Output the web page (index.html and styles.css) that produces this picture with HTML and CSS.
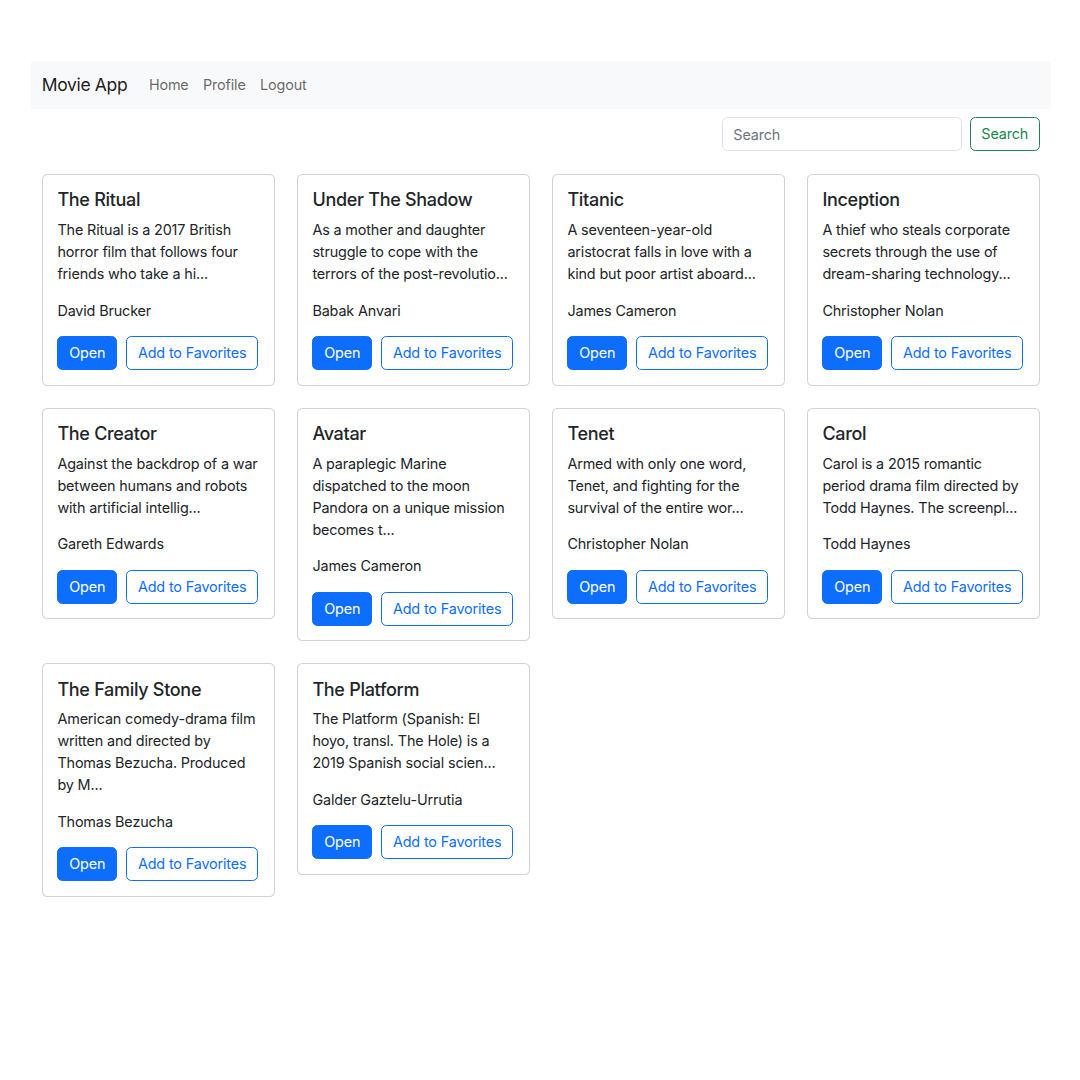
FILE: index.html
```html
<!DOCTYPE html>
<html lang="en">
<head>
<meta charset="utf-8">
<title>Movie App</title>
<link rel="stylesheet" href="styles.css">
</head>
<body>
<div class="page">
  <nav class="navbar">
    <a class="brand" href="#">Movie App</a>
    <ul class="nav">
      <li><a class="nav-link" href="#">Home</a></li>
      <li><a class="nav-link" href="#">Profile</a></li>
      <li><a class="nav-link" href="#">Logout</a></li>
    </ul>
  </nav>
  <form class="search">
    <input class="search-input" type="search" placeholder="Search">
    <button class="btn btn-outline-success" type="button">Search</button>
  </form>
  <div class="grid">
    <div class="card">
      <h5 class="card-title">The Ritual</h5>
      <p class="card-text">The Ritual is a 2017 British horror film that follows four friends who take a hi...</p>
      <p class="card-text">David Brucker</p>
      <div class="actions"><a class="btn btn-primary" href="#">Open</a><button class="btn btn-outline-primary" type="button">Add to Favorites</button></div>
    </div>
    <div class="card">
      <h5 class="card-title">Under The Shadow</h5>
      <p class="card-text">As a mother and daughter struggle to cope with the terrors of the post-revolutio...</p>
      <p class="card-text">Babak Anvari</p>
      <div class="actions"><a class="btn btn-primary" href="#">Open</a><button class="btn btn-outline-primary" type="button">Add to Favorites</button></div>
    </div>
    <div class="card">
      <h5 class="card-title">Titanic</h5>
      <p class="card-text">A seventeen-year-old aristocrat falls in love with a kind but poor artist aboard...</p>
      <p class="card-text">James Cameron</p>
      <div class="actions"><a class="btn btn-primary" href="#">Open</a><button class="btn btn-outline-primary" type="button">Add to Favorites</button></div>
    </div>
    <div class="card">
      <h5 class="card-title">Inception</h5>
      <p class="card-text">A thief who steals corporate secrets through the use of dream-sharing technology...</p>
      <p class="card-text">Christopher Nolan</p>
      <div class="actions"><a class="btn btn-primary" href="#">Open</a><button class="btn btn-outline-primary" type="button">Add to Favorites</button></div>
    </div>
    <div class="card">
      <h5 class="card-title">The Creator</h5>
      <p class="card-text">Against the backdrop of a war between humans and robots with artificial intellig...</p>
      <p class="card-text">Gareth Edwards</p>
      <div class="actions"><a class="btn btn-primary" href="#">Open</a><button class="btn btn-outline-primary" type="button">Add to Favorites</button></div>
    </div>
    <div class="card">
      <h5 class="card-title">Avatar</h5>
      <p class="card-text">A paraplegic Marine dispatched to the moon Pandora on a unique mission becomes t...</p>
      <p class="card-text">James Cameron</p>
      <div class="actions"><a class="btn btn-primary" href="#">Open</a><button class="btn btn-outline-primary" type="button">Add to Favorites</button></div>
    </div>
    <div class="card">
      <h5 class="card-title">Tenet</h5>
      <p class="card-text">Armed with only one word, Tenet, and fighting for the survival of the entire wor...</p>
      <p class="card-text">Christopher Nolan</p>
      <div class="actions"><a class="btn btn-primary" href="#">Open</a><button class="btn btn-outline-primary" type="button">Add to Favorites</button></div>
    </div>
    <div class="card">
      <h5 class="card-title">Carol</h5>
      <p class="card-text">Carol is a 2015 romantic period drama film directed by Todd Haynes. The screenpl...</p>
      <p class="card-text">Todd Haynes</p>
      <div class="actions"><a class="btn btn-primary" href="#">Open</a><button class="btn btn-outline-primary" type="button">Add to Favorites</button></div>
    </div>
    <div class="card">
      <h5 class="card-title">The Family Stone</h5>
      <p class="card-text">American comedy-drama film written and directed by Thomas Bezucha. Produced by M...</p>
      <p class="card-text">Thomas Bezucha</p>
      <div class="actions"><a class="btn btn-primary" href="#">Open</a><button class="btn btn-outline-primary" type="button">Add to Favorites</button></div>
    </div>
    <div class="card">
      <h5 class="card-title">The Platform</h5>
      <p class="card-text">The Platform (Spanish: El hoyo, transl. The Hole) is a 2019 Spanish social scien...</p>
      <p class="card-text">Galder Gaztelu-Urrutia</p>
      <div class="actions"><a class="btn btn-primary" href="#">Open</a><button class="btn btn-outline-primary" type="button">Add to Favorites</button></div>
    </div>
  </div>
</div>
</body>
</html>
```

FILE: styles.css
```css
* { box-sizing: border-box; }
html, body { margin: 0; padding: 0; background: #fff; }
body {
  font-family: Inter, "Noto Sans", "Liberation Sans", sans-serif;
  font-size: 14.4px;
  line-height: 22px;
  letter-spacing: -0.15px;
  color: #212529;
}
.page {
  width: 1020px;
  margin: 61px 0 0 31px;
}
.navbar {
  display: flex;
  align-items: center;
  height: 48px;
  padding: 0 10.8px 1px;
  background: #f8f9fa;
}
.brand {
  font-size: 17.5px;
  line-height: 27px;
  letter-spacing: -0.35px;
  color: rgba(0,0,0,0.9);
  text-decoration: none;
  margin-right: 14.4px;
}
.nav {
  display: flex;
  list-style: none;
  margin: 0;
  padding: 0;
}
.nav-link {
  display: block;
  padding: 7.2px 7.2px;
  color: rgba(0,0,0,0.6);
  text-decoration: none;
}
.search {
  display: flex;
  justify-content: flex-end;
  gap: 8px;
  margin-top: 8px;
  padding-right: 11px;
}
.search-input {
  width: 240px;
  height: 34px;
  padding: 5.4px 10.8px;
  border: 1px solid #dee2e6;
  border-radius: 5.4px;
  font: inherit;
  letter-spacing: -0.15px;
  color: #212529;
  background: #fff;
  outline: none;
}
.search-input::placeholder { color: #6c757d; }
.btn {
  display: inline-block;
  height: 34px;
  padding: 5px 10.8px;
  border: 1px solid transparent;
  border-radius: 5.4px;
  font: inherit;
  letter-spacing: -0.15px;
  line-height: 22px;
  white-space: nowrap;
  text-decoration: none;
  background: transparent;
  cursor: pointer;
}
.btn-outline-success { color: #198754; border-color: #198754; }
.btn-primary { color: #fff; background: #0d6efd; border-color: #0d6efd; }
.btn-outline-primary { color: #0d6efd; border-color: #0d6efd; }
.grid {
  display: grid;
  grid-template-columns: repeat(4, 233px);
  column-gap: 22px;
  row-gap: 22px;
  align-items: start;
  padding: 0 11px;
  margin-top: 23px;
}
.card {
  border: 1px solid rgba(0,0,0,0.175);
  border-radius: 5.4px;
  padding: 14.4px;
  background: #fff;
}
.card-title {
  margin: 0 0 7.6px;
  font-size: 18px;
  line-height: 22px;
  letter-spacing: -0.3px;
  font-weight: 500;
}
.card-text {
  margin: 0 0 14.6px;
}
.actions {
  display: flex;
  gap: 9px;
}
```
